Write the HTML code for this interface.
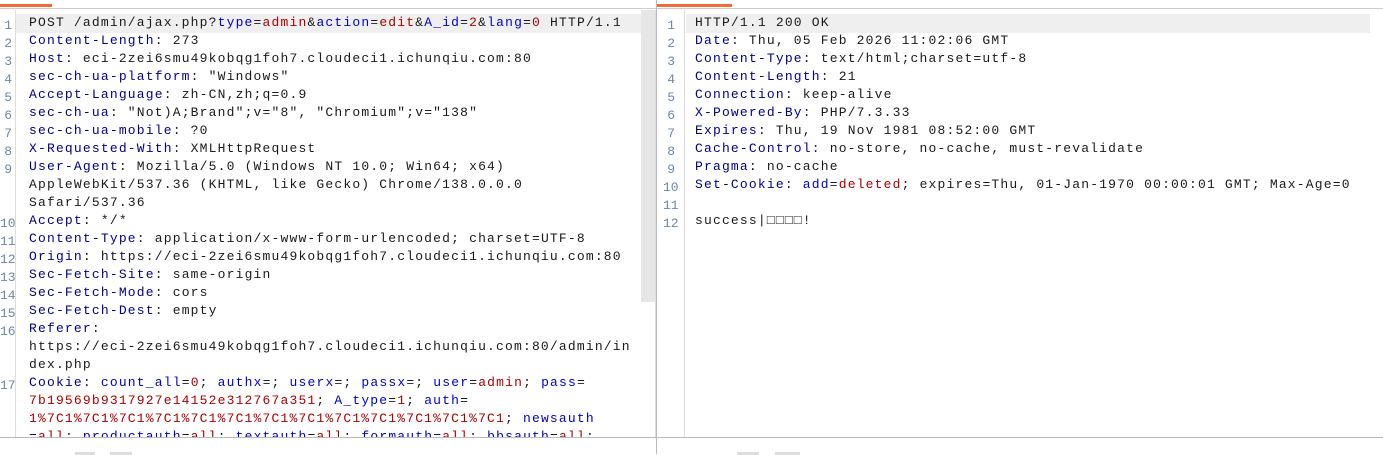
<!DOCTYPE html>
<html><head><meta charset="utf-8"><style>
*{margin:0;padding:0;box-sizing:border-box}
body{width:1383px;height:454px;background:#fff;position:relative;overflow:hidden;font-family:"Liberation Mono","Noto Sans CJK SC",monospace;font-size:13px;letter-spacing:1.18px;color:#1a1a1a}
.a{position:absolute}
.l{position:absolute;white-space:pre;height:18px;line-height:18px}
.n{position:absolute;width:12px;text-align:right;color:#6d88a6;white-space:pre;font-size:13px;letter-spacing:0;line-height:18px;top:3px}
.k{color:#000088}.b{color:#0000cc}.r{color:#aa0000}
</style></head><body>
<div class="a" style="left:0;top:8px;width:1383px;height:1px;background:#ccc"></div>
<div class="a" style="left:0;top:4px;width:52px;height:3px;background:#f26b3a"></div>
<div class="a" style="left:657px;top:4px;width:75px;height:3px;background:#f26b3a"></div>
<div class="a" style="left:656px;top:0;width:1px;height:454px;background:#bbb"></div>
<div class="a" style="left:0;top:437px;width:1383px;height:1px;background:#bbb"></div>
<div class="a" style="left:15px;top:10px;width:1px;height:427px;background:#ddd"></div>
<div class="a" style="left:684px;top:10px;width:1px;height:427px;background:#ddd"></div>
<div class="a" style="left:641px;top:10px;width:14px;height:292px;background:#e6e6e6"></div>
<div class="a" style="left:655px;top:10px;width:1px;height:427px;background:#ddd"></div>
<div class="a" style="left:16px;top:14px;width:625px;height:19px;background:#efefef"></div>
<div class="a" style="left:686px;top:14px;width:684px;height:19px;background:#efefef"></div>
<div class="a" style="left:75px;top:452px;width:20px;height:3px;background:#ddd"></div>
<div class="a" style="left:110px;top:452px;width:22px;height:3px;background:#ddd"></div>
<div class="a" style="left:737px;top:452px;width:22px;height:3px;background:#ddd"></div>
<div class="a" style="left:775px;top:452px;width:25px;height:3px;background:#ddd"></div>

<div style="position:absolute;left:0;top:14px">
<div class="l" style="top:0"><span class="n" style="left:0">1</span></div>
<div class="l" style="top:0;left:29px">POST /admin/ajax.php?<span class="b">type</span>=<span class="r">admin</span>&amp;<span class="b">action</span>=<span class="r">edit</span>&amp;<span class="b">A_id</span>=<span class="r">2</span>&amp;<span class="b">lang</span>=<span class="r">0</span> HTTP/1.1</div>
<div class="l" style="top:18px"><span class="n" style="left:0">2</span></div><div class="l" style="top:18px;left:29px"><span class="k">Content-Length</span>: 273</div>
<div class="l" style="top:36px"><span class="n" style="left:0">3</span></div><div class="l" style="top:36px;left:29px"><span class="k">Host</span>: eci-2zei6smu49kobqg1foh7.cloudeci1.ichunqiu.com:80</div>
<div class="l" style="top:54px"><span class="n" style="left:0">4</span></div><div class="l" style="top:54px;left:29px"><span class="k">sec-ch-ua-platform</span>: "Windows"</div>
<div class="l" style="top:72px"><span class="n" style="left:0">5</span></div><div class="l" style="top:72px;left:29px"><span class="k">Accept-Language</span>: zh-CN,zh;q=0.9</div>
<div class="l" style="top:90px"><span class="n" style="left:0">6</span></div><div class="l" style="top:90px;left:29px"><span class="k">sec-ch-ua</span>: "Not)A;Brand";v="8", "Chromium";v="138"</div>
<div class="l" style="top:108px"><span class="n" style="left:0">7</span></div><div class="l" style="top:108px;left:29px"><span class="k">sec-ch-ua-mobile</span>: ?0</div>
<div class="l" style="top:126px"><span class="n" style="left:0">8</span></div><div class="l" style="top:126px;left:29px"><span class="k">X-Requested-With</span>: XMLHttpRequest</div>
<div class="l" style="top:144px"><span class="n" style="left:0">9</span></div><div class="l" style="top:144px;left:29px"><span class="k">User-Agent</span>: Mozilla/5.0 (Windows NT 10.0; Win64; x64)</div>
<div class="l" style="top:162px;left:29px">AppleWebKit/537.36 (KHTML, like Gecko) Chrome/138.0.0.0</div>
<div class="l" style="top:180px;left:29px">Safari/537.36</div>
<div class="l" style="top:198px"><span class="n" style="left:0">10</span></div><div class="l" style="top:198px;left:29px"><span class="k">Accept</span>: */*</div>
<div class="l" style="top:216px"><span class="n" style="left:0">11</span></div><div class="l" style="top:216px;left:29px"><span class="k">Content-Type</span>: application/x-www-form-urlencoded; charset=UTF-8</div>
<div class="l" style="top:234px"><span class="n" style="left:0">12</span></div><div class="l" style="top:234px;left:29px"><span class="k">Origin</span>: https://eci-2zei6smu49kobqg1foh7.cloudeci1.ichunqiu.com:80</div>
<div class="l" style="top:252px"><span class="n" style="left:0">13</span></div><div class="l" style="top:252px;left:29px"><span class="k">Sec-Fetch-Site</span>: same-origin</div>
<div class="l" style="top:270px"><span class="n" style="left:0">14</span></div><div class="l" style="top:270px;left:29px"><span class="k">Sec-Fetch-Mode</span>: cors</div>
<div class="l" style="top:288px"><span class="n" style="left:0">15</span></div><div class="l" style="top:288px;left:29px"><span class="k">Sec-Fetch-Dest</span>: empty</div>
<div class="l" style="top:306px"><span class="n" style="left:0">16</span></div><div class="l" style="top:306px;left:29px"><span class="k">Referer</span>:</div>
<div class="l" style="top:324px;left:29px">https://eci-2zei6smu49kobqg1foh7.cloudeci1.ichunqiu.com:80/admin/in</div>
<div class="l" style="top:342px;left:29px">dex.php</div>
<div class="l" style="top:360px"><span class="n" style="left:0">17</span></div><div class="l" style="top:360px;left:29px"><span class="k">Cookie</span>: <span class="b">count_all</span>=<span class="r">0</span>; <span class="b">authx</span>=; <span class="b">userx</span>=; <span class="b">passx</span>=; <span class="b">user</span>=<span class="r">admin</span>; <span class="b">pass</span>=</div>
<div class="l" style="top:378px;left:29px"><span class="r">7b19569b9317927e14152e312767a351</span>; <span class="b">A_type</span>=<span class="r">1</span>; <span class="b">auth</span>=</div>
<div class="l" style="top:396px;left:29px"><span class="r">1%7C1%7C1%7C1%7C1%7C1%7C1%7C1%7C1%7C1%7C1%7C1%7C1%7C1</span>; <span class="b">newsauth</span></div>
<div class="a" style="top:414px;left:29px;height:9px;overflow:hidden;width:610px"><div class="l" style="top:0;left:0">=<span class="r">all</span>; <span class="b">productauth</span>=<span class="r">all</span>; <span class="b">textauth</span>=<span class="r">all</span>; <span class="b">formauth</span>=<span class="r">all</span>; <span class="b">bbsauth</span>=<span class="r">all</span>;</div></div>
</div>

<div style="position:absolute;left:663px;top:14px">
<div class="l" style="top:0"><span class="n" style="left:0">1</span></div><div class="l" style="top:0;left:32px">HTTP/1.1 200 OK</div>
<div class="l" style="top:18px"><span class="n" style="left:0">2</span></div><div class="l" style="top:18px;left:32px"><span class="k">Date</span>: Thu, 05 Feb 2026 11:02:06 GMT</div>
<div class="l" style="top:36px"><span class="n" style="left:0">3</span></div><div class="l" style="top:36px;left:32px"><span class="k">Content-Type</span>: text/html;charset=utf-8</div>
<div class="l" style="top:54px"><span class="n" style="left:0">4</span></div><div class="l" style="top:54px;left:32px"><span class="k">Content-Length</span>: 21</div>
<div class="l" style="top:72px"><span class="n" style="left:0">5</span></div><div class="l" style="top:72px;left:32px"><span class="k">Connection</span>: keep-alive</div>
<div class="l" style="top:90px"><span class="n" style="left:0">6</span></div><div class="l" style="top:90px;left:32px"><span class="k">X-Powered-By</span>: PHP/7.3.33</div>
<div class="l" style="top:108px"><span class="n" style="left:0">7</span></div><div class="l" style="top:108px;left:32px"><span class="k">Expires</span>: Thu, 19 Nov 1981 08:52:00 GMT</div>
<div class="l" style="top:126px"><span class="n" style="left:0">8</span></div><div class="l" style="top:126px;left:32px"><span class="k">Cache-Control</span>: no-store, no-cache, must-revalidate</div>
<div class="l" style="top:144px"><span class="n" style="left:0">9</span></div><div class="l" style="top:144px;left:32px"><span class="k">Pragma</span>: no-cache</div>
<div class="l" style="top:162px"><span class="n" style="left:0">10</span></div><div class="l" style="top:162px;left:32px"><span class="k">Set-Cookie</span>: <span class="b">add</span>=<span class="r">deleted</span>; expires=Thu, 01-Jan-1970 00:00:01 GMT; Max-Age=0</div>
<div class="l" style="top:180px"><span class="n" style="left:0">11</span></div>
<div class="l" style="top:198px"><span class="n" style="left:0">12</span></div><div class="l" style="top:198px;left:32px">success|□□□□!</div>
</div>
</body></html>
